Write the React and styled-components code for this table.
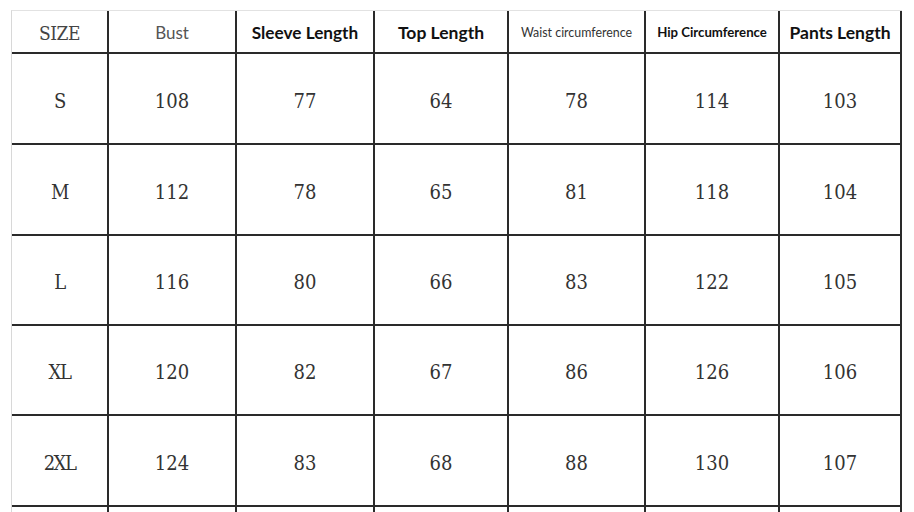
import React from "react";
import styled, { createGlobalStyle } from "styled-components";

const GlobalStyle = createGlobalStyle`
  html, body {
    margin: 0;
    padding: 0;
    background: #ffffff;
    overflow: hidden;
  }
`;

const Page = styled.div`
  padding: 10px 0 0 11px;
  width: 914px;
  height: 512px;
  box-sizing: border-box;
`;

const Chart = styled.div`
  display: grid;
  grid-template-columns: 97px 128px 138px 134px 137px 134px 122px;
  grid-template-rows: 42px 91px 91px 90px 90px 91px 91px;
  width: max-content;
  border-left: 1px solid #d8d8d8;
  border-top: 1px solid #e2e2e2;
`;

const Cell = styled.div`
  display: flex;
  align-items: center;
  justify-content: center;
  box-sizing: border-box;
  border-right: 2px solid #2a2a2a;
  border-bottom: 2px solid #2a2a2a;
  margin-bottom: -1px;
  white-space: nowrap;
`;

const HeadCell = styled(Cell)`
  font-family: Lato, "Open Sans", sans-serif;
  font-size: ${(p) => p.$size}px;
  font-weight: ${(p) => (p.$bold ? 700 : 400)};
  color: ${(p) => p.$color || "#111"};
  padding-top: 1px;
`;

const serifStack = `"DejaVu Serif Condensed", "DejaVu Serif", "Liberation Serif", serif`;

const SizeHead = styled(Cell)`
  font-family: ${serifStack};
  font-stretch: condensed;
  font-size: 19px;
  color: #444;
  padding-top: 2px;
  letter-spacing: -0.5px;
`;

const DataCell = styled(Cell)`
  font-family: ${serifStack};
  font-stretch: condensed;
  font-size: 20px;
  color: #333;
  padding-top: 5px;
  letter-spacing: ${(p) => (p.$label ? "-1.5px" : "0")};
`;

const headers = [
  { label: "Bust", size: 17, bold: false, color: "#555" },
  { label: "Sleeve Length", size: 17.2, bold: true },
  { label: "Top Length", size: 17.5, bold: true },
  { label: "Waist circumference", size: 12.4, bold: false, color: "#333" },
  { label: "Hip Circumference", size: 13.2, bold: true },
  { label: "Pants Length", size: 17.5, bold: true },
];

const rows = [
  ["S", 108, 77, 64, 78, 114, 103],
  ["M", 112, 78, 65, 81, 118, 104],
  ["L", 116, 80, 66, 83, 122, 105],
  ["XL", 120, 82, 67, 86, 126, 106],
  ["2XL", 124, 83, 68, 88, 130, 107],
  ["", "", "", "", "", "", ""],
];

export default function App() {
  return (
    <>
      <GlobalStyle />
      <Page>
        <Chart>
          <SizeHead>SIZE</SizeHead>
          {headers.map((h) => (
            <HeadCell key={h.label} $size={h.size} $bold={h.bold} $color={h.color}>
              {h.label}
            </HeadCell>
          ))}
          {rows.map((row, r) =>
            row.map((value, c) => (
              <DataCell key={`${r}-${c}`} $label={c === 0}>
                {value}
              </DataCell>
            ))
          )}
        </Chart>
      </Page>
    </>
  );
}
